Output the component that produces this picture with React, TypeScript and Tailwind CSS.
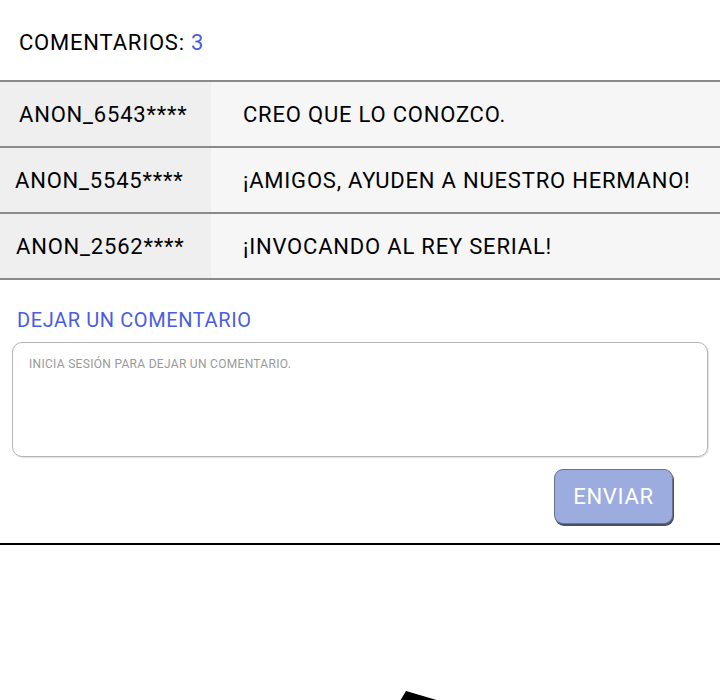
import React from "react";

const comments = [
  { user: "ANON_6543****", text: "CREO QUE LO CONOZCO.", pad: "pl-[19px]" },
  { user: "ANON_5545****", text: "¡AMIGOS, AYUDEN A NUESTRO HERMANO!", pad: "pl-[15px]" },
  { user: "ANON_2562****", text: "¡INVOCANDO AL REY SERIAL!", pad: "pl-[16px]" },
];

const App = () => {
  return (
    <div className="w-[720px] h-[700px] bg-white overflow-hidden font-['Roboto',sans-serif] text-black">
      <div className="h-[80px] flex items-center pl-[19px] pt-[4px] text-[22px] tracking-[0.8px]">
        COMENTARIOS:&nbsp;<span className="text-[#4a5de0]">3</span>
      </div>

      <div className="border-b-2 border-[#8a8a8a]">
        {comments.map((c) => (
          <div key={c.user} className="flex h-[66px] border-t-2 border-[#8a8a8a] text-[22px] tracking-[0.8px]">
            <div className={`w-[211px] bg-[#efefef] flex items-center ${c.pad}`}>{c.user}</div>
            <div className="flex-1 bg-[#f6f6f6] flex items-center pl-[32px]">{c.text}</div>
          </div>
        ))}
      </div>

      <section className="px-[12px]">
        <div className="pl-[5px] pt-[28px] text-[20px] leading-[24px] tracking-[0.6px] text-[#4a5de0]">DEJAR UN COMENTARIO</div>
        <div className="mt-[10px] h-[115px] w-[696px] rounded-[10px] border border-[#b5b5b5] shadow-[1px_1px_1px_rgba(0,0,0,0.12)] px-[16px] pt-[12px] text-[12px] tracking-[0.3px] text-[#9a9a9a]">
          INICIA SESIÓN PARA DEJAR UN COMENTARIO.
        </div>
        <div className="flex justify-end pr-[35px] pt-[12px]">
          <button className="w-[119px] h-[55px] rounded-[9px] bg-[#9dacdf] text-white text-[22px] tracking-[0.7px] border border-[#6a7290] shadow-[1px_2px_0_#4a4f66]">
            ENVIAR
          </button>
        </div>
      </section>

      <div className="mt-[19px] h-[2px] bg-black" />

      <div className="h-[155px] relative">
        <svg className="absolute left-[395px] top-[144px]" width="60" height="12" viewBox="0 0 60 12">
          <polygon points="5,12 11,2 45,12" fill="#000" />
        </svg>
      </div>
    </div>
  );
};

export default App;
